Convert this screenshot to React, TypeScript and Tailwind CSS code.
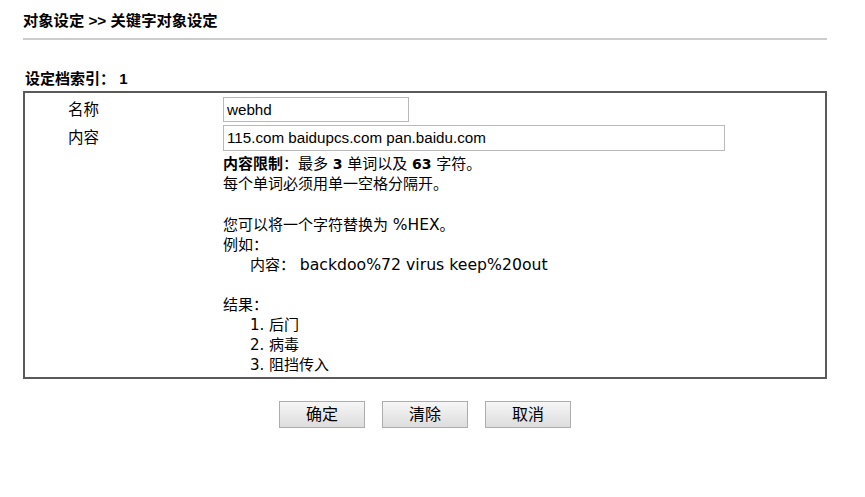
import React from "react";

const cjk = { fontFamily: '"Liberation Sans", "Noto Sans CJK SC", sans-serif' };
const body = { fontFamily: '"DejaVu Sans", "Noto Sans CJK SC", sans-serif' };

function Btn({ children }: { children: React.ReactNode }) {
  return (
    <button
      className="w-[86px] h-[27px] border border-[#adadad] bg-gradient-to-b from-[#f6f6f6] to-[#dddddd] text-[16px] text-black leading-none"
      style={cjk}
    >
      {children}
    </button>
  );
}

export default function App() {
  return (
    <div className="w-[865px] h-[497px] bg-white text-black" style={cjk}>
      <div className="pl-[23px] pr-[38px] pt-[12px]">
        <div className="text-[15.3px] font-bold leading-[18px] h-[25px]">对象设定 &gt;&gt; 关键字对象设定</div>
        <div className="h-[2px] bg-[#cccccc] mt-[1px]" />
        <div className="text-[15px] font-bold leading-[18px] mt-[30px] pl-[2px]">设定档索引： 1</div>
        <div className="mt-[3px] border-2 border-[#5a5a5a] h-[288px] pt-[3px]">
          <div className="flex items-center h-[27px]">
            <div className="w-[198px] pl-[43px] text-[15.5px]">名称</div>
            <input
              readOnly
              value="webhd"
              className="w-[186px] h-[25px] border border-[#b9b9b9] px-[3px] text-[15.2px] outline-none"
              style={{ fontFamily: '"Liberation Sans", sans-serif' }}
            />
          </div>
          <div className="flex items-center h-[29px]">
            <div className="w-[198px] pl-[43px] text-[15.5px]">内容</div>
            <input
              readOnly
              value="115.com baidupcs.com pan.baidu.com"
              className="w-[502px] h-[26px] border border-[#b9b9b9] px-[3px] text-[15.2px] outline-none"
              style={{ fontFamily: '"Liberation Sans", sans-serif' }}
            />
          </div>
          <div className="pl-[198px] pt-[2px] text-[15px] leading-[20px]" style={body}>
            <div>
              <b>内容限制</b>：最多 <b className="text-[14px]">3</b> 单词以及 <b className="text-[14px]">63</b> 字符。
            </div>
            <div>每个单词必须用单一空格分隔开。</div>
            <div className="h-[21px]" />
            <div>
              您可以将一个字符替换为 <span className="text-[15.5px]">%HEX</span>。
            </div>
            <div>例如：</div>
            <div className="pl-[27px]">
              内容： <span className="text-[15.7px]">backdoo%72 virus keep%20out</span>
            </div>
            <div className="h-[20px]" />
            <div>结果：</div>
            <div className="pl-[27px]">1. 后门</div>
            <div className="pl-[27px]">2. 病毒</div>
            <div className="pl-[27px]">3. 阻挡传入</div>
          </div>
        </div>
        <div className="flex justify-center gap-[17px] mt-[22px]">
          <Btn>确定</Btn>
          <Btn>清除</Btn>
          <Btn>取消</Btn>
        </div>
      </div>
    </div>
  );
}
